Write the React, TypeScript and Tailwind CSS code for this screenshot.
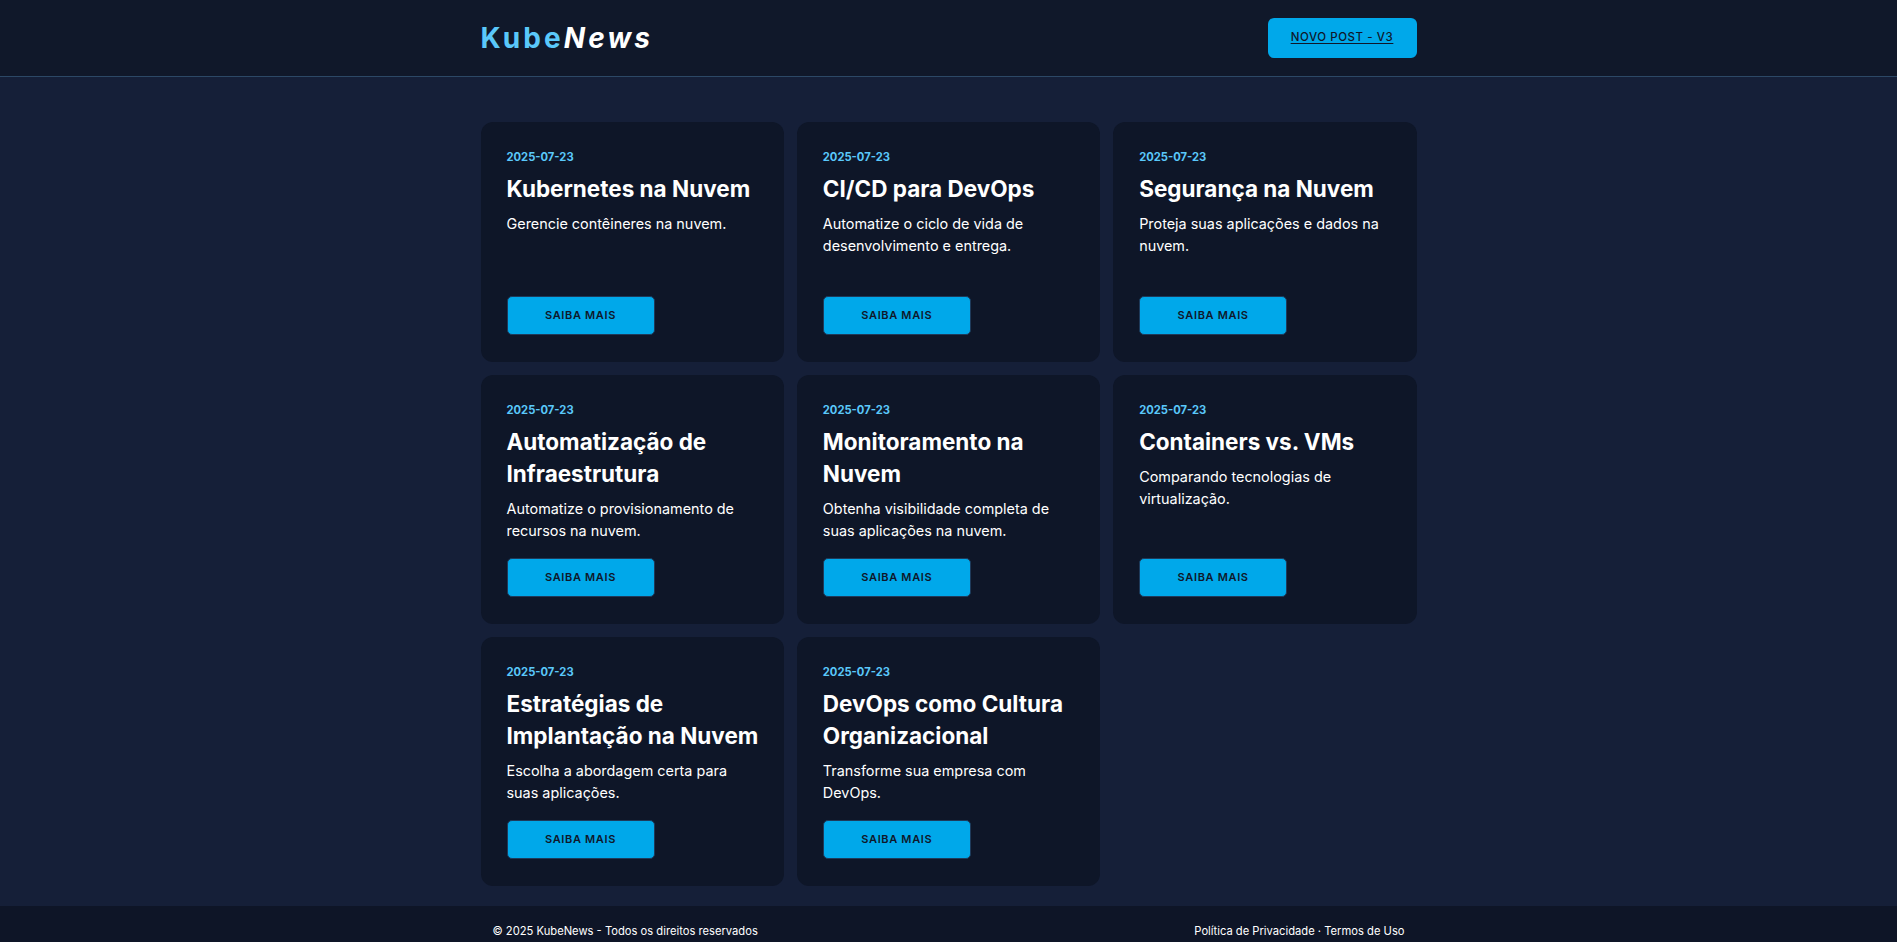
import React from 'react';

interface Post {
  id: number;
  date: string;
  title: string;
  summary: string;
}

const posts: Post[] = [
  { id: 1, date: '2025-07-23', title: 'Kubernetes na Nuvem', summary: 'Gerencie contêineres na nuvem.' },
  { id: 2, date: '2025-07-23', title: 'CI/CD para DevOps', summary: 'Automatize o ciclo de vida de desenvolvimento e entrega.' },
  { id: 3, date: '2025-07-23', title: 'Segurança na Nuvem', summary: 'Proteja suas aplicações e dados na nuvem.' },
  { id: 4, date: '2025-07-23', title: 'Automatização de Infraestrutura', summary: 'Automatize o provisionamento de recursos na nuvem.' },
  { id: 5, date: '2025-07-23', title: 'Monitoramento na Nuvem', summary: 'Obtenha visibilidade completa de suas aplicações na nuvem.' },
  { id: 6, date: '2025-07-23', title: 'Containers vs. VMs', summary: 'Comparando tecnologias de virtualização.' },
  { id: 7, date: '2025-07-23', title: 'Estratégias de Implantação na Nuvem', summary: 'Escolha a abordagem certa para suas aplicações.' },
  { id: 8, date: '2025-07-23', title: 'DevOps como Cultura Organizacional', summary: 'Transforme sua empresa com DevOps.' },
];

function PostCard({ post }: { post: Post }) {
  return (
    <div className="flex flex-col min-h-[240px] rounded-xl bg-[#0e1628] pl-[26px] pr-[20px] pt-[27px] pb-[27px]">
      <span className="text-[11.2px] leading-4 font-bold text-[#5ac8fa]">{post.date}</span>
      <h2 className="mt-2 text-[22.5px] leading-8 font-bold text-white">{post.title}</h2>
      <p className="mt-2 mb-4 mr-[8px] text-[14.4px] leading-[22px] text-white">{post.summary}</p>
      <button className="mt-auto w-[148px] h-[39px] rounded-[5px] border border-[#1e3a5a] bg-[#00a8ea] text-[11px] font-semibold tracking-[0.06em] text-[#0f172a]">
        SAIBA MAIS
      </button>
    </div>
  );
}

export default function App() {
  return (
    <div className="min-h-screen flex flex-col bg-[#151f38]" style={{ fontFamily: 'Inter, "Liberation Sans", sans-serif' }}>
      <header className="h-[77px] bg-[#10182a] border-b border-[#2c4866]">
        <div className="max-w-[960px] h-full mx-auto px-3 flex items-center justify-between">
          <a href="#" className="text-[28px] font-bold tracking-[0.11em] leading-none">
            <span className="text-[#5ac8fa]">Kube</span>
            <span className="italic text-white">News</span>
          </a>
          <button className="w-[149px] h-[40px] rounded-md bg-[#00a8ea] text-[11.5px] font-medium tracking-[0.05em] text-[#0f172a] underline underline-offset-2">
            NOVO POST - V3
          </button>
        </div>
      </header>

      <main className="flex-1 pt-[45px] pb-5">
        <div className="max-w-[960px] mx-auto px-3 grid grid-cols-3 gap-[13px]">
          {posts.map((post) => (
            <PostCard key={post.id} post={post} />
          ))}
        </div>
      </main>

      <footer className="bg-[#0e1527] pt-[17px] pb-5">
        <div className="max-w-[960px] mx-auto px-6 flex items-center justify-between text-[11.2px] leading-4 text-white">
          <span>© 2025 KubeNews - Todos os direitos reservados</span>
          <span>Política de Privacidade · Termos de Uso</span>
        </div>
      </footer>
    </div>
  );
}
